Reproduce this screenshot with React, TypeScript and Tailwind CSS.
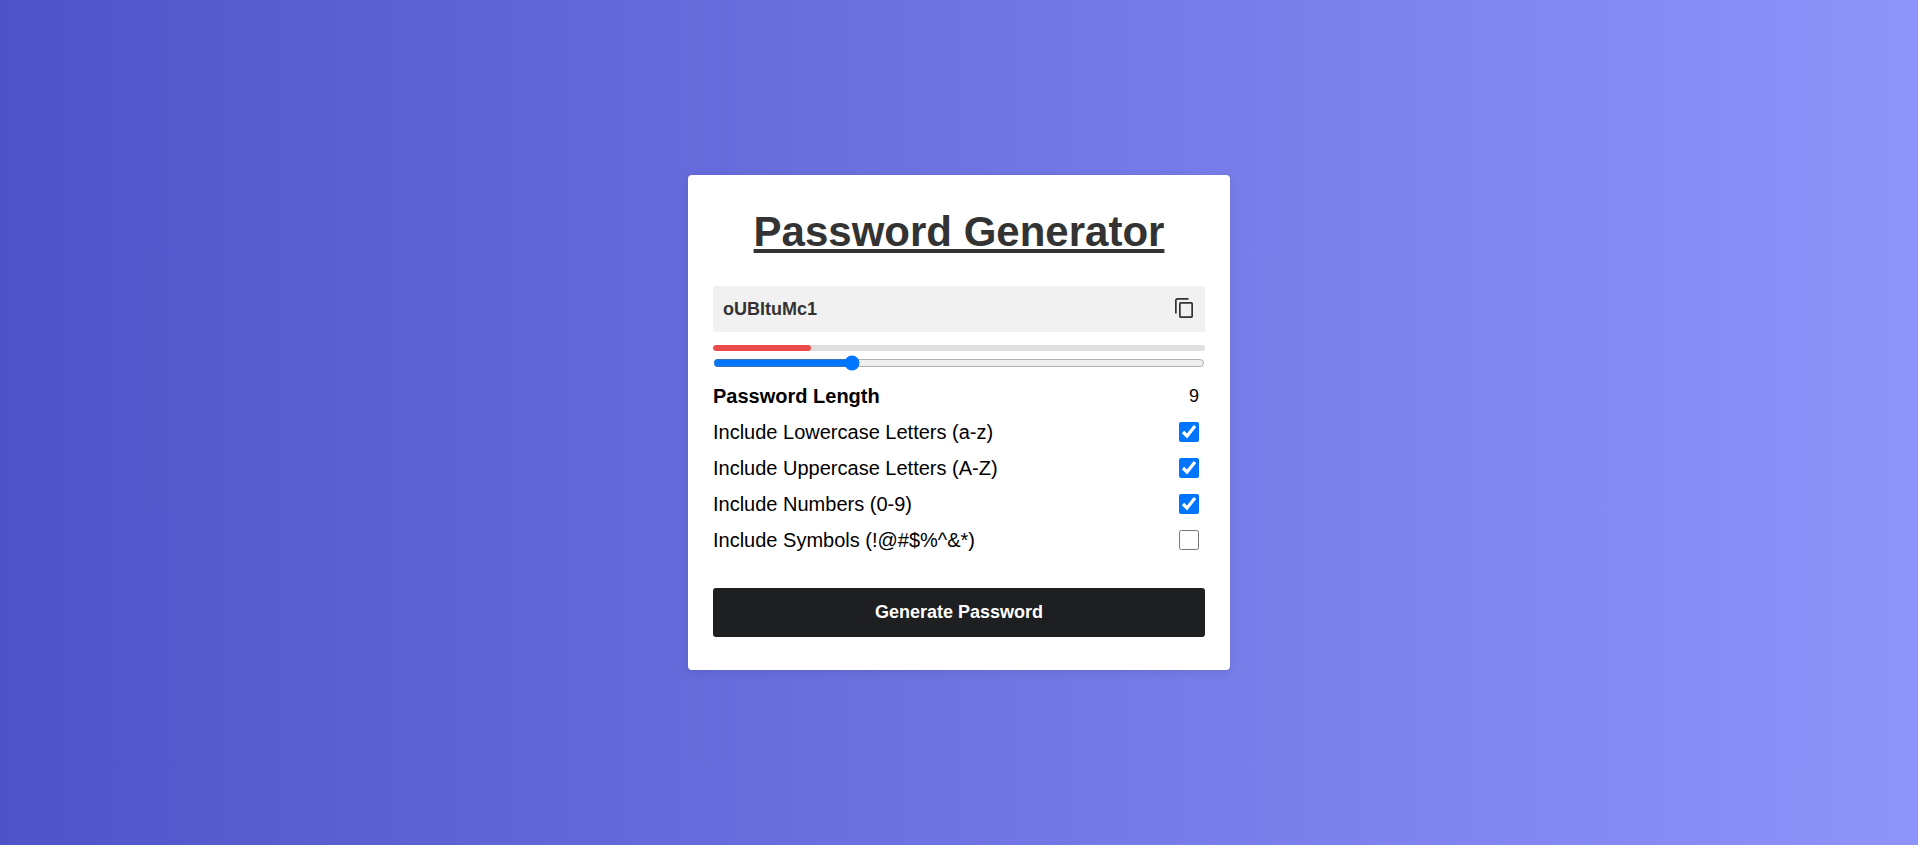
import { useState } from "react";

const options = [
  { id: "lowercase", label: "Include Lowercase Letters (a-z)", on: true },
  { id: "uppercase", label: "Include Uppercase Letters (A-Z)", on: true },
  { id: "numbers", label: "Include Numbers (0-9)", on: true },
  { id: "symbols", label: "Include Symbols (!@#$%^&*)", on: false },
];

function CopyIcon() {
  return (
    <svg width="24" height="24" viewBox="0 0 24 24" fill="none" stroke="currentColor" strokeWidth="1.7" aria-hidden="true">
      <rect x="8.85" y="5.85" width="12.3" height="14.3" rx="0.8" />
      <path d="M4.85 16.5V3.2a1.35 1.35 0 0 1 1.35-1.35H17.5" />
    </svg>
  );
}

export default function App() {
  const [length, setLength] = useState(9);

  return (
    <main className="flex min-h-screen items-center justify-center bg-[linear-gradient(to_right,#4e54c8,#8f94fb)] font-['Liberation_Sans',Arial,sans-serif] text-black">
      <section className="w-full max-w-[542px] rounded-[4px] bg-white px-[25px] py-[33px] shadow-[0_2px_10px_rgba(0,0,0,0.1)]">
        <h1 className="mb-[30px] text-center text-[42px] leading-12 font-bold text-[#333] underline decoration-4 underline-offset-3">
          Password Generator
        </h1>
        <div className="mb-[13px] flex items-center rounded-[3px] bg-[#f1f1f1] px-[10px] py-[11px] text-[#333]">
          <input
            aria-label="Generated password"
            readOnly
            value="oUBItuMc1"
            className="min-w-0 flex-1 bg-transparent text-[18px] leading-6 font-bold outline-none"
          />
          <button type="button" aria-label="Copy password">
            <CopyIcon />
          </button>
        </div>
        <div className="h-[6px] overflow-hidden rounded-[3px] bg-[#dfdfdf]">
          <div className="h-full w-1/5 rounded-[3px] bg-[#ea4b4b]" />
        </div>
        <input
          id="length"
          type="range"
          min={1}
          max={30}
          value={length}
          onChange={(e) => setLength(Number(e.target.value))}
          className="mt-[6px] mb-[9px] block h-3 w-full [&::-webkit-slider-thumb]:size-3"
        />
        <div className="flex h-9 items-center justify-between pr-[6px]">
          <label htmlFor="length" className="text-[20px] font-bold">
            Password Length
          </label>
          <span className="text-[18px]">{length}</span>
        </div>
        {options.map((o) => (
          <div key={o.id} className="flex h-9 items-center justify-between pr-[6px]">
            <label htmlFor={o.id} className="text-[20px]">
              {o.label}
            </label>
            <input id={o.id} type="checkbox" defaultChecked={o.on} className="size-5" />
          </div>
        ))}
        <button
          type="button"
          className="mt-[30px] h-[49px] w-full rounded-[3px] bg-[#1e1f21] text-[18px] font-bold text-white"
        >
          Generate Password
        </button>
      </section>
    </main>
  );
}
